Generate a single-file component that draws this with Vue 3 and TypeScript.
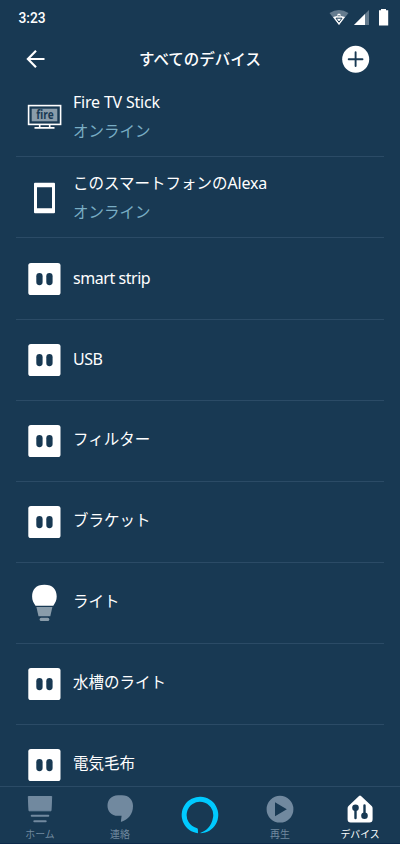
<script setup lang="ts">
type DeviceKind = 'tv' | 'phone' | 'plug' | 'bulb'

interface Device {
  kind: DeviceKind
  name: string
  latin?: string
  status?: string
}

const devices: Device[] = [
  { kind: 'tv', name: '', latin: 'Fire TV Stick', status: 'オンライン' },
  { kind: 'phone', name: 'このスマートフォンの', latin: 'Alexa', status: 'オンライン' },
  { kind: 'plug', name: '', latin: 'smart strip' },
  { kind: 'plug', name: '', latin: 'USB' },
  { kind: 'plug', name: 'フィルター' },
  { kind: 'plug', name: 'ブラケット' },
  { kind: 'bulb', name: 'ライト' },
  { kind: 'plug', name: '水槽のライト' },
  { kind: 'plug', name: '電気毛布' },
]
</script>

<template>
  <div class="screen">
    <div class="status-bar">
      <span class="clock">3:23</span>
      <svg class="status-icons" width="62" height="20" viewBox="0 0 62 20">
        <path d="M1.500 5Q11 -1.200 20.500 5L11 17Z" fill="#647b8e" />
        <path d="M5 9L9 8L9.800 5.800H12.200L13 8L17 9L11 17Z" fill="#fff" />
        <path d="M8 10.200H14L11 14.200Z" fill="none" stroke="#183953" stroke-width="1" />
        <path d="M9.500 7.800H12.500" stroke="#183953" stroke-width=".7" />
        <path d="M26 17L41 2V17Z" fill="#647b8e" />
        <path d="M26 17L37 6V17Z" fill="#fff" />
        <path d="M53 1H58V2.300H60.200V17.500H51V2.300H53Z" fill="#fff" />
      </svg>
    </div>

    <header class="header">
      <svg class="back" width="20" height="20" viewBox="0 0 20 20">
        <path d="M18.500 10H2M10 1.800L1.900 10L10 18.200" fill="none" stroke="#fff" stroke-width="2.200" />
      </svg>
      <h1 class="title">すべてのデバイス</h1>
      <svg class="add" width="28" height="28" viewBox="0 0 28 28">
        <circle cx="13.700" cy="14.200" r="13.500" fill="#fff" />
        <path d="M13.600 7.300V21.100M6.700 14.200H20.500" stroke="#183953" stroke-width="1.900" stroke-linecap="round" />
      </svg>
    </header>

    <main class="list">
      <div
        v-for="(device, index) in devices"
        :key="index"
        class="row"
        :class="{ single: !device.status }"
      >
        <svg class="icon" width="40" height="40" viewBox="0 0 40 40">
          <g v-if="device.kind === 'tv'">
            <rect x="4.600" y="9.600" width="32" height="18.800" fill="none" stroke="#fff" stroke-width="1.600" />
            <rect x="7.700" y="12.700" width="25.600" height="12.600" fill="#899caa" />
            <path d="M15.700 29V32M25.700 29V32M10.500 31.900H30.500" stroke="#fff" stroke-width="1.600" />
            <text x="12.200" y="23.200" class="fire" textLength="17.500" lengthAdjust="spacingAndGlyphs">fire</text>
          </g>
          <path
            v-else-if="device.kind === 'phone'"
            fill="#fff"
            fill-rule="evenodd"
            d="M11 5.700H30Q31 5.700 31 6.700V35.200Q31 36.200 30 36.200H11Q10 36.200 10 35.200V6.700Q10 5.700 11 5.700ZM13 10.300V31.200H28V10.300Z"
          />
          <g v-else-if="device.kind === 'plug'">
            <rect x="4.300" y="4" width="32.200" height="32" rx="2.600" fill="#fff" />
            <rect x="12.300" y="14" width="6.300" height="12.200" rx="3.150" fill="#183953" />
            <rect x="22.300" y="14" width="6.300" height="12.200" rx="3.150" fill="#183953" />
          </g>
          <g v-else>
            <path d="M11.500 22.800C9.500 19.500 8.100 17.500 8.100 13.500C8.100 6.500 12 1.800 20.400 1.800S32.700 6.500 32.700 13.500C32.700 17.500 31.300 19.500 29.300 22.800Z" fill="#fff" />
            <path d="M12.400 24H28.400L26.300 33.200H14.500Z" fill="#899caa" />
            <rect x="15.600" y="34.700" width="9.700" height="3.200" rx="1.500" fill="#899caa" />
          </g>
        </svg>
        <div class="labels">
          <span class="name">{{ device.name }}<span v-if="device.latin" class="latin">{{ device.latin }}</span></span>
          <span v-if="device.status" class="status">{{ device.status }}</span>
        </div>
      </div>
    </main>

    <nav class="tabs">
      <a class="tab">
        <svg width="28" height="30" viewBox="0 0 28 30">
          <path d="M2.300 1.500H25.700L25 15.800H3Z" fill="#71899f" stroke="#71899f" stroke-linejoin="round" />
          <path d="M5.700 20.700H22.300M8.300 26.300H19.700" stroke="#71899f" stroke-width="2" stroke-linecap="round" />
        </svg>
        <span>ホーム</span>
      </a>
      <a class="tab">
        <svg width="28" height="30" viewBox="0 0 28 30">
          <path d="M12 .200H16C23 .200 27 5 27 11C27 19.500 22 24.500 15.500 26.700Q14.800 27 14.900 26.200L15.600 20.800H12C5 20.800 1.500 16 1.500 10.700S5 .200 12 .200Z" fill="#71899f" />
        </svg>
        <span>連絡</span>
      </a>
      <a class="tab">
        <svg class="alexa" width="38" height="38" viewBox="0 0 38 38">
          <path
            d="M17 37.200A18.300 18.300 0 1 1 19.500 37.300V36.800C24.500 35 30.500 31 32.100 21A13.300 13.300 0 1 0 15.600 31.900Q16.900 32.300 16.900 33.600Z"
            fill="#00caff"
          />
        </svg>
      </a>
      <a class="tab">
        <svg width="28" height="30" viewBox="0 0 28 30">
          <path fill-rule="evenodd" d="M14 .800A13.400 13.400 0 1 0 14 27.600A13.400 13.400 0 1 0 14 .800ZM9 7.300L20.800 14.200L9 21.200Z" fill="#71899f" />
        </svg>
        <span>再生</span>
      </a>
      <a class="tab active">
        <svg width="28" height="30" viewBox="0 0 28 30">
          <path d="M13 1.100Q14 .100 15 1.100L25.700 11.100Q26.600 12 26.600 13.300V24.300Q26.600 27.500 23.500 27.500H4.700Q1.600 27.500 1.600 24.300V13.300Q1.600 12 2.500 11.100Z" fill="#fff" />
          <path d="M9.500 13V23.100M18.500 10.500V21" stroke="#183953" stroke-width="2.400" stroke-linecap="round" />
          <circle cx="9.500" cy="12.700" r="3.300" fill="#183953" />
          <circle cx="18.500" cy="20.700" r="3.300" fill="#183953" />
        </svg>
        <span>デバイス</span>
      </a>
    </nav>
  </div>
</template>

<style>
body {
  background: #183953;
}
</style>

<style scoped>
.screen {
  display: flex;
  flex-direction: column;
  width: 400px;
  height: 844px;
  overflow: hidden;
  background: #183953;
  color: #fff;
  font-family: 'Noto Sans', 'Noto Sans CJK JP', sans-serif;
}

.status-bar {
  display: flex;
  flex: none;
  justify-content: space-between;
  align-items: center;
  height: 36px;
  padding: 0 10px 0 18.500px;
}

.clock {
  font: 500 13.800px/20px Roboto, sans-serif;
}

.header {
  display: grid;
  flex: none;
  grid-template-columns: 58px 1fr 58px;
  align-items: center;
  height: 40px;
  padding-top: 2px;
  box-sizing: border-box;
}

.back {
  justify-self: start;
  margin: 4px 0 0 26px;
}

.title {
  margin: 2px 0 0;
  text-align: center;
  font: 500 15.500px/24px 'Noto Sans CJK JP', sans-serif;
}

.add {
  justify-self: start;
  margin-top: 4px;
}

.list {
  flex: 1;
  min-height: 0;
  overflow: hidden;
  padding: 0 16px;
}

.row {
  display: flex;
  align-items: center;
  box-sizing: border-box;
  height: 81px;
  padding-left: 8px;
  border-bottom: 1px solid #2b4b66;
}

.row:nth-child(3) {
  height: 82px;
}

.icon {
  flex: none;
}

.fire {
  font: 700 12px 'Open Sans', sans-serif;
  fill: #183953;
}

.labels {
  display: flex;
  flex-direction: column;
  gap: 5px;
  margin: 0 0 1px 9px;
}

.single .labels {
  margin-bottom: 6px;
}

.single:nth-child(3) .labels {
  margin-bottom: 4px;
}

.single:nth-child(4) .labels {
  margin-bottom: 5px;
}

.name,
.status {
  font: 400 15.500px/24px 'Noto Sans CJK JP', sans-serif;
  white-space: nowrap;
}

.name .latin {
  font-family: 'Noto Sans', sans-serif;
  font-size: 16px;
  line-height: 1;
  letter-spacing: -0.200px;
}

.single .latin {
  letter-spacing: -0.450px;
}

.status {
  color: #79adc4;
}

.tabs {
  display: grid;
  flex: none;
  grid-template-columns: repeat(5, 80px);
  box-sizing: border-box;
  height: 58px;
  border-top: 1px solid #2b4b66;
  border-bottom: 1px solid #0d2a4a;
}

.tab {
  display: flex;
  flex-direction: column;
  align-items: center;
  padding-top: 8px;
  color: #71899f;
  font: 400 9.900px/16px 'Noto Sans CJK JP', sans-serif;
}

.tab span {
  margin-top: 1px;
}

.alexa {
  margin-top: 1px;
}

.active {
  color: #fff;
}
</style>
